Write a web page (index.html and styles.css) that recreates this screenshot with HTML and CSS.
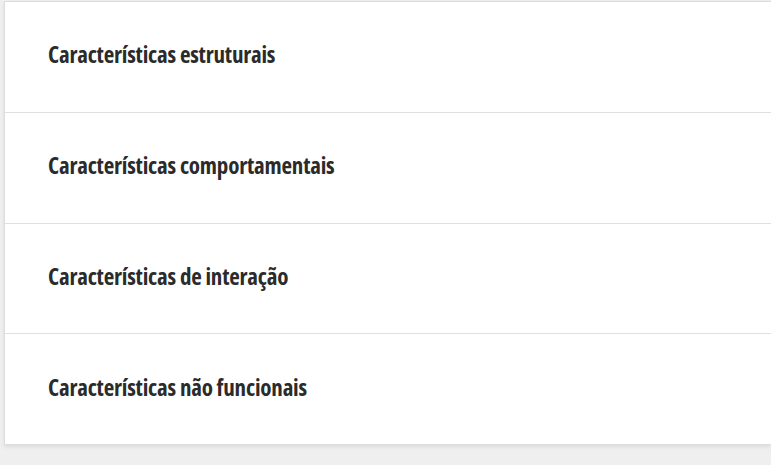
FILE: index.html
```html
<!DOCTYPE html>
<html lang="pt">
<head>
<meta charset="utf-8">
<link rel="stylesheet" href="styles.css">
</head>
<body>
<div class="card">
  <div class="row"><h3 class="title">Características estruturais</h3></div>
  <div class="row"><h3 class="title">Características comportamentais</h3></div>
  <div class="row"><h3 class="title">Características de interação</h3></div>
  <div class="row"><h3 class="title">Características não funcionais</h3></div>
</div>
</body>
</html>
```
FILE: styles.css
```css
html, body { margin: 0; padding: 0; }
body {
  background: #efefef;
  padding: 1px 0 0 4px;
  height: 465px;
  box-sizing: border-box;
  overflow: hidden;
}
.card {
  background: #fff;
  border: 1px solid #dcdcdc;
  border-right: none;
  border-bottom: none;
  box-shadow: 0 2px 4px rgba(0,0,0,0.08);
}
.row {
  height: 110.8px;
  box-sizing: border-box;
  border-bottom: 1px solid #e0e0e0;
  display: flex;
  align-items: center;
  padding-left: 43px;
  padding-bottom: 5px;
}
.row:last-child { border-bottom: 1px solid #dcdcdc; }
.title {
  margin: 0;
  font-family: "Open Sans", sans-serif;
  font-stretch: 75%;
  font-weight: 700;
  font-size: 23px;
  letter-spacing: -0.2px;
  color: #2b2b2b;
}
```
